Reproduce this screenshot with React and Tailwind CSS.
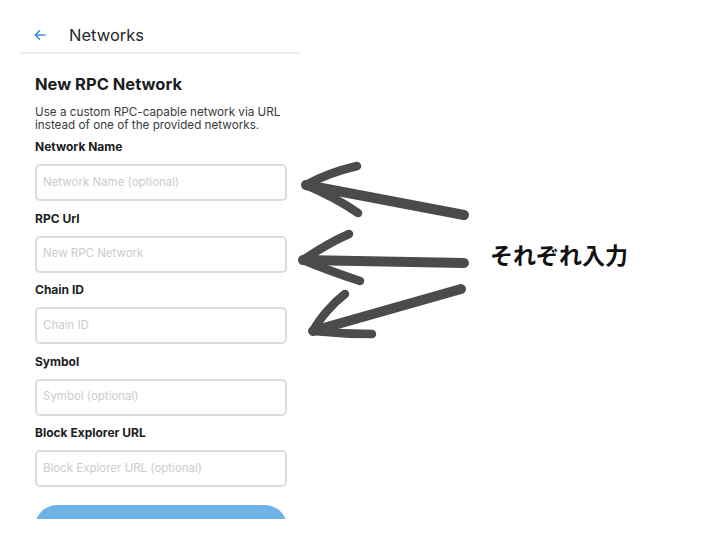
import React from "react";

const fields = [
  { label: "Network Name", placeholder: "Network Name (optional)" },
  { label: "RPC Url", placeholder: "New RPC Network" },
  { label: "Chain ID", placeholder: "Chain ID" },
  { label: "Symbol", placeholder: "Symbol (optional)" },
  { label: "Block Explorer URL", placeholder: "Block Explorer URL (optional)" },
];

function Arrows() {
  const c = "#4b4b4b";
  return (
    <svg
      className="absolute left-0 top-0 pointer-events-none"
      width="704"
      height="538"
      viewBox="0 0 704 538"
      fill="none"
    >
      <g stroke={c} strokeLinecap="round" strokeLinejoin="round">
        {/* arrow 1 */}
        <path d="M464 215 L306 185" strokeWidth="10" />
        <path d="M306 185 C322 176 340 170 357 166" strokeWidth="8.5" />
        <path d="M306 185 C325 193 345 204 358 213" strokeWidth="8.5" />
        {/* arrow 2 */}
        <path d="M464 263 L303 260" strokeWidth="10" />
        <path d="M303 260 C318 250 335 240 349 234" strokeWidth="8.5" />
        <path d="M303 260 C322 268 345 276 360 281" strokeWidth="8.5" />
        {/* arrow 3 */}
        <path d="M461 289 L313 331" strokeWidth="10" />
        <path d="M313 331 C320 318 333 303 345 294" strokeWidth="8.5" />
        <path d="M313 331 C333 333 353 334 372 334" strokeWidth="8.5" />
      </g>
    </svg>
  );
}

export default function App() {
  return (
    <div
      className="relative w-[704px] h-[538px] bg-white overflow-hidden"
      style={{ fontFamily: "Inter, 'Noto Sans', sans-serif" }}
    >
      <div className="ml-[20px] w-[280px] h-[519px] overflow-hidden">
        <div className="h-[54px] pt-[20px] flex items-start border-b-2 border-[#efefef]">
          <div className="h-[30px] flex items-center pl-[13px]">
            <svg width="14" height="14" viewBox="0 0 14 14" fill="none">
              <path
                d="M12 7 H2.5 M6.5 2.8 L2.3 7 L6.5 11.2"
                stroke="#3d8ee6"
                strokeWidth="1.6"
                strokeLinecap="round"
                strokeLinejoin="round"
              />
            </svg>
            <span className="ml-[22px] text-[16.5px] text-[#24272a] leading-[30px] -mt-[1px]">
              Networks
            </span>
          </div>
        </div>
        <div className="pl-[15px] pr-[13px]">
          <div className="mt-[20px] text-[16.5px] leading-[20px] font-bold text-[#1b1d1f]">
            New RPC Network
          </div>
          <div className="mt-[12px] text-[11.7px] leading-[13px] text-[#3a3d40] whitespace-nowrap">
            Use a custom RPC-capable network via URL
            <br />
            instead of one of the provided networks.
          </div>
          {fields.map((f, i) => (
            <div key={f.label}>
              <div
                className={
                  (i === 0 ? "mt-[7px] " : "mt-[9.5px] ") +
                  "text-[12px] leading-[16px] font-bold text-[#1b1d1f] mb-[9px]"
                }
              >
                {f.label}
              </div>
              <div className="h-[37px] rounded-[5px] border-2 border-[#dadcde] flex items-center pl-[6px]">
                <span className="text-[11.5px] text-[#c9ccd0]">{f.placeholder}</span>
              </div>
            </div>
          ))}
          <div className="mt-[18px] h-[44px] rounded-full bg-[#6fb2e6]" />
        </div>
      </div>
      <Arrows />
      <div
        className="absolute left-[490px] top-[240px] text-[23px] font-bold text-[#111] leading-[28px]"
        style={{ fontFamily: "'Noto Sans CJK JP', sans-serif" }}
      >
        それぞれ入力
      </div>
    </div>
  );
}
